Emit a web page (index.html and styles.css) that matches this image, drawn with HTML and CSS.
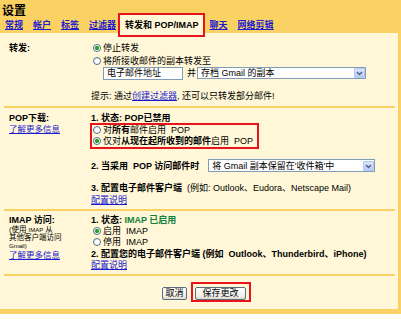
FILE: index.html
```html
<!DOCTYPE html>
<html lang="zh-CN">
<head>
    <meta charset="UTF-8">
    <title>设置 - 转发和 POP/IMAP</title>
    <link rel="stylesheet" href="styles.css">
</head>
<body>
    <div class="page">
        <div class="header">
            <div class="title">设置</div>
            <div class="tabs">
                <a class="tab" href="#">常规</a>
                <a class="tab" href="#">帐户</a>
                <a class="tab" href="#">标签</a>
                <a class="tab" href="#">过滤器</a>
                <span class="tab active">转发和 POP/IMAP</span>
                <a class="tab" href="#">聊天</a>
                <a class="tab" href="#">网络剪辑</a>
            </div>
        </div>

        <div class="panel">
            <!-- forwarding -->
            <div class="section fwd">
                <div class="label"><b>转发:</b></div>
                <div class="body">
                    <div class="row r13"><span class="radio on"></span>停止转发</div>
                    <div class="row"><span class="radio"></span>将所接收邮件的副本转发至</div>
                    <div class="fwd-to">
                        <span class="input">电子邮件地址</span>
                        <span class="and">并</span>
                        <span class="select sel-fwd">存档 Gmail 的副本<i class="arrow"><svg width="9" height="8" viewBox="0 0 9 8"><polyline points="2,3 4.5,5.5 7,3" fill="none" stroke="#4d6185" stroke-width="1.4"/></svg></i></span>
                    </div>
                    <div class="tip">提示: 通过<a href="#">创建过滤器</a>, 还可以只转发部分邮件!</div>
                </div>
            </div>

            <!-- pop -->
            <div class="section pop">
                <div class="label">
                    <b class="row">POP下载:</b>
                    <a class="more" href="#">了解更多信息</a>
                </div>
                <div class="body">
                    <div class="row"><b>1. 状态: POP已禁用</b></div>
                    <div class="marked">
                        <div class="row r11"><span class="radio"></span>对<b>所有</b>邮件启用&nbsp; POP</div>
                        <div class="row r11"><span class="radio on"></span>仅对<b>从现在起所收到的邮件</b>启用&nbsp; POP</div>
                    </div>
                    <div class="when">
                        <b>2. 当采用&nbsp; POP 访问邮件时</b>
                        <span class="select sel-pop">将 Gmail 副本保留在'收件箱'中<i class="arrow"><svg width="9" height="8" viewBox="0 0 9 8"><polyline points="2,3 4.5,5.5 7,3" fill="none" stroke="#4d6185" stroke-width="1.4"/></svg></i></span>
                    </div>
                    <div class="row step3"><b>3. 配置电子邮件客户端</b>&nbsp; (例如: Outlook、Eudora、Netscape Mail)</div>
                    <div class="row"><a href="#">配置说明</a></div>
                </div>
            </div>

            <!-- imap -->
            <div class="section imap">
                <div class="label">
                    <b class="row">IMAP 访问:</b>
                    <div class="small">(使用 <span class="tiny">IMAP</span> 从</div>
                    <div class="small">其他客户端访问</div>
                    <div class="small"><span class="tiny">Gmail)</span></div>
                    <a class="more" href="#">了解更多信息</a>
                </div>
                <div class="body">
                    <div class="row"><b>1. 状态: <span class="green">IMAP 已启用</span></b></div>
                    <div class="row r11"><span class="radio on"></span>启用&nbsp; IMAP</div>
                    <div class="row r11"><span class="radio"></span>停用&nbsp; IMAP</div>
                    <div class="row"><b>2. 配置您的电子邮件客户端 (例如&nbsp; Outlook、Thunderbird、iPhone)</b></div>
                    <div class="row r10"><a href="#">配置说明</a></div>
                </div>
            </div>

            <div class="actions">
                <button class="btn cancel">取消</button>
                <span class="marked-btn"><button class="btn save">保存更改</button></span>
            </div>
        </div>
    </div>
</body>
</html>
```

FILE: styles.css
```css
* {
    margin: 0;
    padding: 0;
    box-sizing: border-box;
}

body {
    font-family: "Liberation Sans", "Noto Sans CJK SC", sans-serif;
    font-size: 9px;
    color: #000;
    background: #fff;
}

a {
    color: #1a1ad0;
}

.page {
    width: 401px;
    background: #fad163;
    padding: 0 3px 5px 0;
}

.header {
    height: 33px;
    padding-top: 4px;
}

.title {
    height: 14px;
    padding-left: 2px;
    font-size: 12px;
    line-height: 14px;
    font-weight: bold;
}

.tabs {
    display: flex;
    align-items: flex-end;
    height: 15px;
}

.tab {
    padding: 0 5px 2px;
    line-height: 11px;
    font-weight: bold;
    color: #1a1ad0;
    text-decoration: underline;
    white-space: nowrap;
}

.tab.active {
    position: relative;
    z-index: 1;
    color: #000;
    text-decoration: none;
    background: #fff7d7;
    border: 2px solid #e8141b;
    padding: 5px 4px 4px 5px;
    margin: 0 0 -4px -3px;
}

.panel {
    background: #fff7d7;
    padding: 0 3px 0 4px;
}

.section {
    display: grid;
    grid-template-columns: 82px 1fr;
    padding-left: 5px;
    border-bottom: 2px solid #fad163;
}

.label {
    display: flex;
    flex-direction: column;
    align-items: flex-start;
}

.row {
    display: block;
    line-height: 12px;
    white-space: nowrap;
}

.r13 { line-height: 13px; }
.r11 { line-height: 11px; }
.r10 { line-height: 10px; }

.more {
    font-size: 8.5px;
    line-height: 10px;
}

.radio {
    display: inline-block;
    width: 8px;
    height: 8px;
    margin: 0 2px 0 2px;
    vertical-align: -1px;
    border: 1px solid #4f6f96;
    border-radius: 50%;
    background: radial-gradient(circle at 60% 60%, #fff 40%, #dfe3ea 100%);
}

.radio.on {
    background: radial-gradient(circle, #2bb12b 0, #1f9a1f 1.8px, #fff 2.3px, #fff 60%, #dfe3ea 100%);
}

/* forwarding */
.fwd {
    padding: 9px 0 3px 5px;
}

.fwd .label {
    line-height: 13px;
}

.fwd-to {
    display: flex;
    align-items: flex-start;
    height: 13px;
    padding-left: 12px;
}

.input {
    width: 80px;
    height: 13px;
    padding-left: 3px;
    line-height: 11px;
    background: #fff;
    border: 1px solid #7f9db9;
}

.and {
    margin: 0 1px 0 4px;
    line-height: 12px;
}

.select {
    display: flex;
    align-items: center;
    height: 12px;
    padding-left: 3px;
    background: #fff;
    border: 1px solid #7f9db9;
    white-space: nowrap;
    line-height: 10px;
}

.sel-fwd {
    width: 169px;
}

.sel-pop {
    width: 167px;
    height: 13px;
    margin-left: 9px;
}

.arrow {
    display: flex;
    align-items: center;
    justify-content: center;
    width: 11px;
    height: 10px;
    margin-left: auto;
    background: linear-gradient(#dce6fd, #b9cbf5);
    border: 1px solid #b3c6f0;
    border-radius: 1px;
}

.tip {
    margin-top: 10px;
    line-height: 13px;
    white-space: nowrap;
}

/* pop */
.pop {
    padding: 4px 0 3px 5px;
}

.marked {
    width: fit-content;
    margin: -1px 0 0 -1px;
    padding: 0 4px 0 1px;
    border: 2px solid #e8141b;
}

.marked .radio {
    margin-left: 0;
}

.when {
    display: flex;
    align-items: center;
    height: 13px;
    margin-top: 10px;
    white-space: nowrap;
}

.step3 {
    margin-top: 10px;
}

/* imap */
.imap {
    padding: 3px 0 4px 5px;
}

.small {
    font-size: 7.5px;
    line-height: 8px;
    white-space: nowrap;
}

.tiny {
    font-size: 6px;
}

.green {
    color: #12803a;
}

/* buttons */
.actions {
    display: flex;
    align-items: flex-start;
    height: 33px;
    padding: 6px 0 0 158px;
}

.btn {
    height: 13px;
    font-family: inherit;
    font-size: 9px;
    line-height: 11px;
    color: #000;
    background: linear-gradient(#ffffff, #f0efe9 70%, #dcdad0);
    border: 1px solid #5d6a7c;
    border-radius: 2px;
}

.cancel {
    width: 25px;
    margin-top: 5px;
}

.marked-btn {
    display: flex;
    margin-left: 4px;
    padding: 3px 3px 0 2px;
    border: 2px solid #e8141b;
}

.save {
    width: 51px;
}
```
